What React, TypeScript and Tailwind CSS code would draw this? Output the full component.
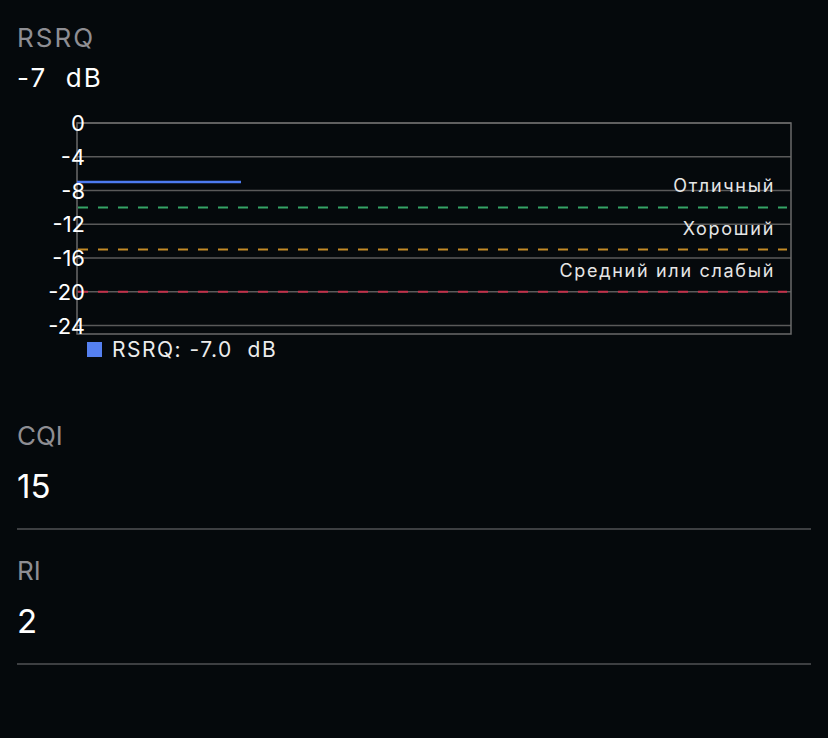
const TOP = 15;
const BOTTOM = 226;
const LEFT = 77;
const RIGHT = 791;
const MIN = -25;

const yOf = (v: number) => TOP + (v / MIN) * (BOTTOM - TOP);

const ticks = [0, -4, -8, -12, -16, -20, -24];

const thresholds = [
  { value: -10, color: "#35a566", label: "Отличный" },
  { value: -15, color: "#c38b27", label: "Хороший" },
  { value: -20, color: "#c4304a", label: "Средний или слабый" },
];

function RsrqChart({ value }: { value: number }) {
  return (
    <svg width={828} height={231} className="block" style={{ fontFamily: "Inter, sans-serif" }}>
      {ticks.map((t) => (
        <line key={t} x1={LEFT} x2={RIGHT} y1={yOf(t)} y2={yOf(t)} stroke="#5a5a5a" strokeWidth={1.5} />
      ))}
      {thresholds.map((th) => (
        <g key={th.value}>
          <line
            x1={LEFT + 1}
            x2={787}
            y1={yOf(th.value)}
            y2={yOf(th.value)}
            stroke={th.color}
            strokeWidth={2}
            strokeDasharray="10 10"
          />
          <text
            x={775}
            y={yOf(th.value) - 15}
            textAnchor="end"
            fontSize={18}
            letterSpacing={1.7}
            fill="#e6e6e6"
          >
            {th.label}
          </text>
        </g>
      ))}
      <rect x={LEFT} y={TOP} width={RIGHT - LEFT} height={BOTTOM - TOP} fill="none" stroke="#6a6a6a" strokeWidth={1.5} />
      <line x1={LEFT} x2={241} y1={yOf(value)} y2={yOf(value)} stroke="#4d7bf0" strokeWidth={2.5} />
      {ticks.map((t) => (
        <text key={t} x={85} y={yOf(t) + 8} textAnchor="end" fontSize={22} fill="#ffffff">
          {t}
        </text>
      ))}
    </svg>
  );
}

function Metric({ label, value }: { label: string; value: string }) {
  return (
    <div className="border-b-2 border-[#3d3f42] pt-[25px] pb-[22px]">
      <div className="text-[26px] leading-[32px] text-[#8e8e93]">{label}</div>
      <div className="mt-[14px] text-[33px] leading-[40px] text-white">{value}</div>
    </div>
  );
}

export default function App() {
  return (
    <div className="min-h-[738px] w-[828px] bg-[#05090c] font-['Inter',sans-serif]">
      <div className="px-[17px] pt-[22px]">
        <div className="text-[26px] leading-[32px] tracking-[2px] text-[#8e8e93]">RSRQ</div>
        <div className="mt-[8px] whitespace-pre text-[26px] leading-[32px] tracking-[2px] text-white">-7  dB</div>
      </div>
      <div className="mt-[14px]">
        <RsrqChart value={-7} />
      </div>
      <div className="flex h-[21px] items-center gap-[10px] pl-[87px]">
        <span className="h-[15px] w-[15px] bg-[#5580f0]" />
        <span className="whitespace-pre text-[21px] leading-none tracking-[1.5px] text-[#ececec]">RSRQ: -7.0  dB</span>
      </div>
      <div className="mx-[17px] mt-[35px]">
        <Metric label="CQI" value="15" />
        <Metric label="RI" value="2" />
      </div>
    </div>
  );
}
